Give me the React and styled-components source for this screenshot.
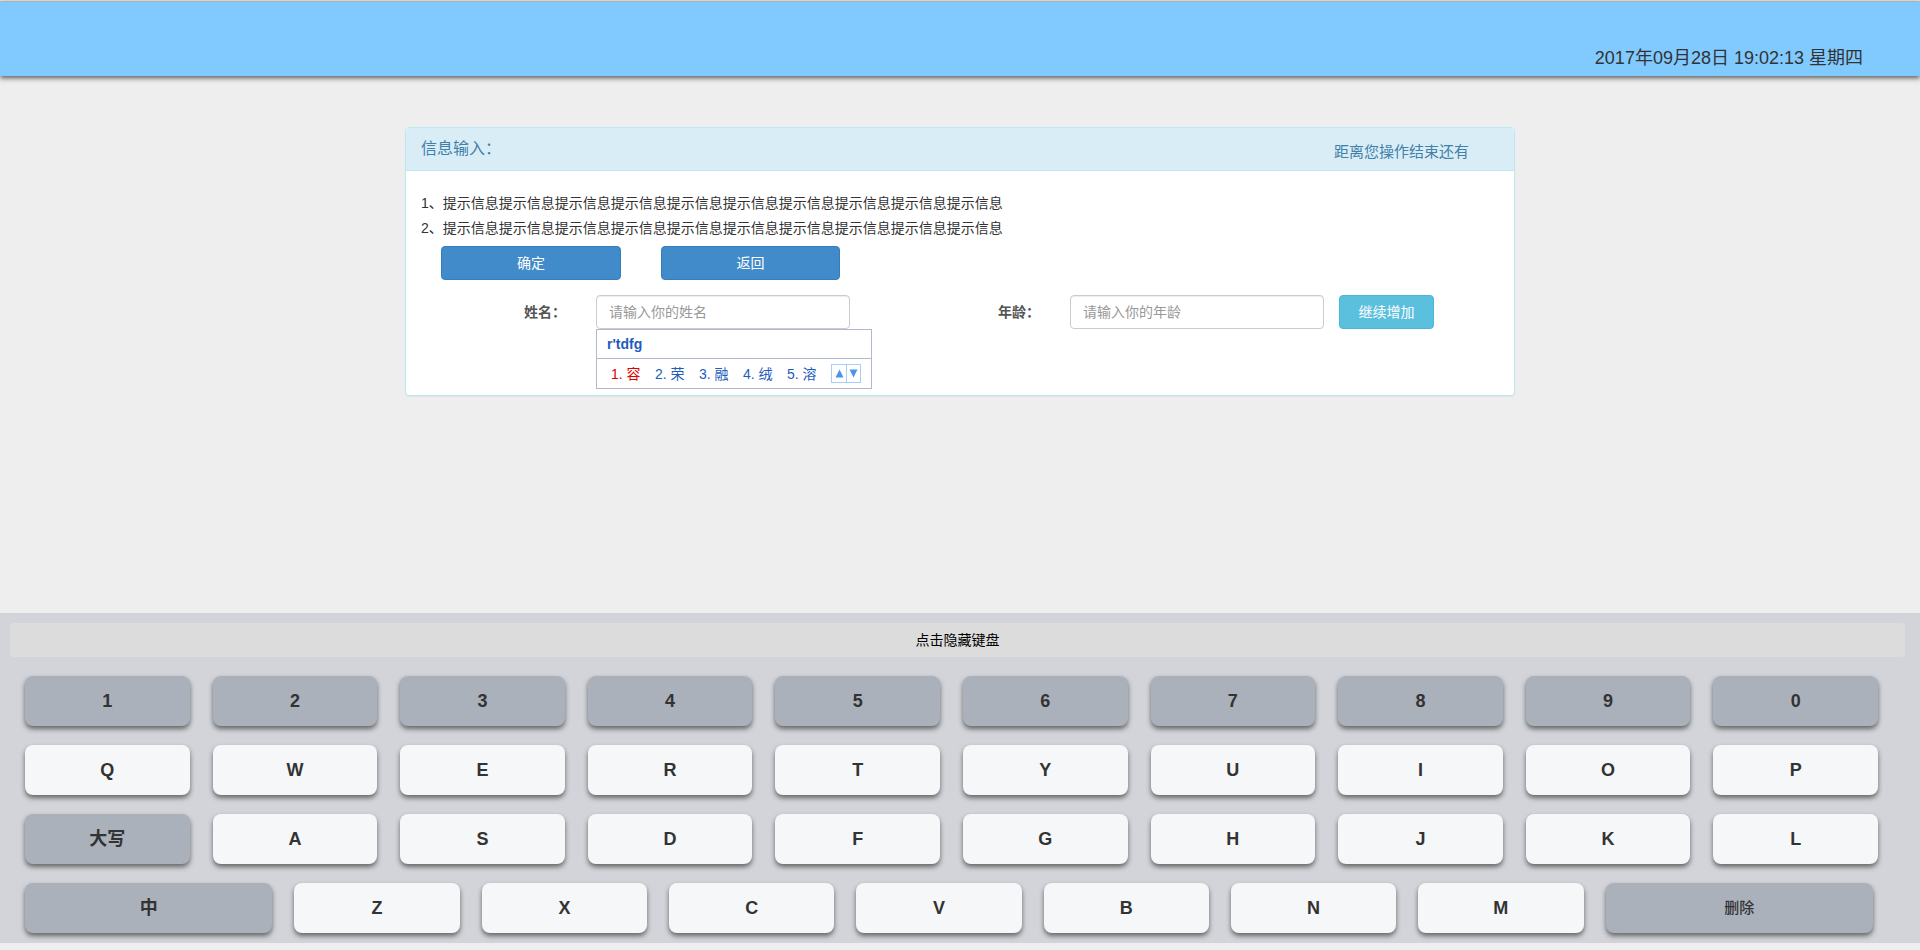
import React from "react";
import styled, { createGlobalStyle } from "styled-components";

const GlobalStyle = createGlobalStyle`
  *, *::before, *::after { box-sizing: border-box; }
  body {
    margin: 0;
    background: #eee;
    color: #333;
    font-family: "Liberation Sans", "Noto Sans CJK SC", sans-serif;
    font-size: 14px;
    line-height: 20px;
  }
  button, input { font-family: inherit; font-size: inherit; line-height: 20px; }
`;

const Page = styled.div`
  min-height: 100vh;
  padding-top: 1px;
  display: flex;
  flex-direction: column;
`;

const TopBar = styled.header`
  height: 75px;
  padding: 0 57px 5px 0;
  display: flex;
  justify-content: flex-end;
  align-items: flex-end;
  background: #80caff;
  border-top: 1px solid #a8b4bc;
  box-shadow: 0 2px 5px #555;
  font-size: 18px;
  line-height: 26px;
`;

const Main = styled.main`
  flex: 1;
  padding: 51px 15px 20px;
`;

const Panel = styled.section`
  max-width: 1110px;
  margin: 0 auto;
  background: #fff;
  border: 1px solid #bce8f1;
  border-radius: 4px;
  box-shadow: 0 1px 1px rgba(0, 0, 0, 0.05);
`;

const PanelHeading = styled.div`
  display: flex;
  justify-content: space-between;
  align-items: center;
  height: 43px;
  padding: 0 45px 0 15px;
  background: #d9edf7;
  border-bottom: 1px solid #bce8f1;
  border-radius: 3px 3px 0 0;
  color: #4180a8;
`;

const PanelTitle = styled.h1`
  margin: 0;
  font-size: 16px;
  font-weight: 400;
  line-height: 20px;
`;

const Countdown = styled.span`
  padding-top: 5px;
  font-size: 15px;
`;

const PanelBody = styled.div`
  padding: 20px 15px 66px;
`;

const Hints = styled.div`
  line-height: 25px;
`;

const HintLine = styled.p`
  margin: 0;
`;

const Actions = styled.div`
  display: flex;
  gap: 40px;
  padding: 5px 20px 15px;
`;

const Button = styled.button`
  height: 34px;
  width: ${(p) => p.$width};
  flex: none;
  padding: 0 12px;
  color: #fff;
  background: ${(p) => (p.$info ? "#5bc0de" : "#428bca")};
  border: 1px solid ${(p) => (p.$info ? "#46b8da" : "#357ebd")};
  border-radius: 4px;
  cursor: pointer;
`;

const FormRow = styled.form`
  display: flex;
  gap: 15px;
  padding-right: 65px;
`;

const Fields = styled.div`
  flex: 1;
  display: flex;
  gap: 45px;
`;

const Field = styled.div`
  flex: 1;
  display: flex;
  align-items: center;
  gap: 30px;
`;

const Label = styled.label`
  flex: 145;
  text-align: right;
  font-weight: 700;
  color: #555;
`;

const InputWrap = styled.div`
  position: relative;
  flex: 254;
`;

const Input = styled.input`
  display: block;
  width: 100%;
  height: 34px;
  padding: 6px 12px;
  color: #555;
  background: #fff;
  border: 1px solid #ccc;
  border-radius: 4px;
  box-shadow: inset 0 1px 1px rgba(0, 0, 0, 0.075);
  outline: none;
  &::placeholder { color: #999; opacity: 1; }
`;

const ImePopup = styled.div`
  position: absolute;
  top: 100%;
  left: 0;
  width: 276px;
  background: #fff;
  border: 1px solid #b4b8cc;
  color: #1e5bbd;
`;

const ImeSpelling = styled.div`
  height: 29px;
  padding: 0 10px;
  border-bottom: 1px solid #b4b8cc;
  font-weight: 700;
  line-height: 28px;
`;

const ImeCandidates = styled.div`
  height: 29px;
  display: flex;
  align-items: center;
  justify-content: space-between;
  padding: 0 10px 0 14px;
`;

const Candidate = styled.button`
  padding: 0;
  border: 0;
  background: none;
  color: ${(p) => (p.$active ? "#e00000" : "#1e5bbd")};
  cursor: pointer;
`;

const Pager = styled.div`
  display: flex;
  border: 1px solid #a9cdf5;
`;

const PagerButton = styled.button`
  display: grid;
  place-items: center;
  width: 14px;
  height: 17px;
  padding: 0;
  border: 0;
  background: #fff;
  cursor: pointer;
  & + & { border-left: 1px solid #a9cdf5; }
`;

const Keyboard = styled.section`
  margin-bottom: 7px;
  padding: 10px 15px 10px 10px;
  background: #d2d4da;
`;

const HideBar = styled.button`
  display: block;
  width: 100%;
  height: 34px;
  margin-bottom: 19px;
  border: 0;
  border-radius: 4px;
  background: #dcdcdc;
  color: #000;
  cursor: pointer;
`;

const Keys = styled.div`
  display: flex;
  flex-direction: column;
  gap: 19px;
  padding: 0 27px 0 15px;
`;

const KeyRow = styled.div`
  display: flex;
  gap: ${(p) => (p.$inset ? "22px" : "23px")};
  padding-right: ${(p) => (p.$inset ? "5px" : "0")};
`;

const Key = styled.button`
  flex: ${(p) => p.$grow || 165} 1 0;
  min-width: 0;
  height: 50px;
  padding: 0;
  border: 0;
  border-radius: 8px;
  background: ${(p) => (p.$dark ? "#abb1bb" : "#f6f7f9")};
  box-shadow: 0 3px 5px #666;
  color: #333;
  font-size: ${(p) => (p.$small ? "15px" : "18px")};
  font-weight: ${(p) => (p.$small ? 500 : 700)};
  cursor: pointer;
`;

const hint = "提示信息".repeat(10);
const candidates = ["容", "荣", "融", "绒", "溶"];
const dark = (label, extra) => ({ label, dark: true, ...extra });
const light = (letters) => [...letters].map((label) => ({ label }));

const keyRows = [
  [..."1234567890"].map((d) => dark(d)),
  light("QWERTYUIOP"),
  [dark("大写"), ...light("ASDFGHJKL")],
  [
    dark("中", { grow: 247 }),
    ...light("ZXCVBNM"),
    dark("删除", { grow: 267, small: true }),
  ],
];

function Triangle({ down }) {
  return (
    <svg width="9" height="9" viewBox="0 0 9 9" aria-hidden="true">
      <path d={down ? "M.5 .5h8L4.5 8.5z" : "M4.5 .5L8.5 8.5H.5z"} fill="#4a94ea" />
    </svg>
  );
}

export default function App() {
  return (
    <>
      <GlobalStyle />
      <Page>
        <TopBar>
          <time dateTime="2017-09-28T19:02:13">2017年09月28日 19:02:13 星期四</time>
        </TopBar>
        <Main>
          <Panel>
            <PanelHeading>
              <PanelTitle>信息输入：</PanelTitle>
              <Countdown>距离您操作结束还有</Countdown>
            </PanelHeading>
            <PanelBody>
              <Hints>
                <HintLine>1、{hint}</HintLine>
                <HintLine>2、{hint}</HintLine>
              </Hints>
              <Actions>
                <Button type="button" $width="180px">确定</Button>
                <Button type="button" $width="179px">返回</Button>
              </Actions>
              <FormRow onSubmit={(e) => e.preventDefault()}>
                <Fields>
                  <Field>
                    <Label htmlFor="name">姓名：</Label>
                    <InputWrap>
                      <Input id="name" type="text" placeholder="请输入你的姓名" />
                      <ImePopup>
                        <ImeSpelling>r'tdfg</ImeSpelling>
                        <ImeCandidates>
                          {candidates.map((c, i) => (
                            <Candidate key={c} type="button" $active={i === 0}>
                              {i + 1}. {c}
                            </Candidate>
                          ))}
                          <Pager>
                            <PagerButton type="button" aria-label="上一页">
                              <Triangle />
                            </PagerButton>
                            <PagerButton type="button" aria-label="下一页">
                              <Triangle down />
                            </PagerButton>
                          </Pager>
                        </ImeCandidates>
                      </ImePopup>
                    </InputWrap>
                  </Field>
                  <Field>
                    <Label htmlFor="age">年龄：</Label>
                    <InputWrap>
                      <Input id="age" type="text" placeholder="请输入你的年龄" />
                    </InputWrap>
                  </Field>
                </Fields>
                <Button type="button" $info $width="95px">继续增加</Button>
              </FormRow>
            </PanelBody>
          </Panel>
        </Main>
        <Keyboard aria-label="键盘">
          <HideBar type="button">点击隐藏键盘</HideBar>
          <Keys>
            {keyRows.map((row, i) => (
              <KeyRow key={i} $inset={i === 3}>
                {row.map((k) => (
                  <Key key={k.label} type="button" $dark={k.dark} $grow={k.grow} $small={k.small}>
                    {k.label}
                  </Key>
                ))}
              </KeyRow>
            ))}
          </Keys>
        </Keyboard>
      </Page>
    </>
  );
}
